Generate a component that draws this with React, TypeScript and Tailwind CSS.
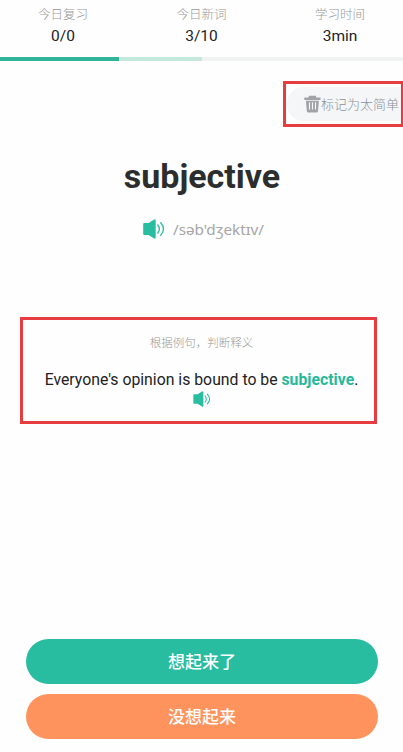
const stats = [
  { label: "今日复习", value: "0/0" },
  { label: "今日新词", value: "3/10" },
  { label: "学习时间", value: "3min" }
];

function SpeakerIcon({ className }: { className?: string }) {
  return (
    <svg viewBox="0 0 22 20" className={className} fill="none">
      <path
        d="M1.2 4H5.6L10.8.7Q12.7-.3 12.7 1.6V18.4Q12.7 20.3 10.8 19.3L5.6 16H1.2Q.2 16 .2 15V5Q.2 4 1.2 4Z"
        fill="#28bda0"
      />
      <path
        d="M14.8 6Q18 10 14.8 14M17.7 3.8Q23.3 10 17.7 16.2"
        stroke="#28bda0"
        strokeWidth="1.3"
        strokeLinecap="round"
      />
    </svg>
  );
}

function TrashIcon() {
  return (
    <svg viewBox="0 0 17 18" className="h-[18px] w-[17px] shrink-0" fill="none">
      <path d="M4.7.7H12.1V2.5H16.5V5H.3V2.5H4.7Z" fill="#a1a3a7" />
      <path d="M1.9 5.8H14.9L14 16Q13.9 17.5 12.4 17.5H4.4Q2.9 17.5 2.8 16Z" fill="#a1a3a7" />
      <path d="M5.5 7.2V14.4M8.5 7.2V14.4M11.5 7.2V14.4" stroke="#f4f6f8" strokeWidth="1.1" />
    </svg>
  );
}

function Header() {
  return (
    <header>
      <div className="flex h-[57px] justify-between px-[38px] pt-[5px]">
        {stats.map((item) => (
          <div key={item.label} className="flex w-[50px] flex-col items-center whitespace-nowrap">
            <span className="text-[12.5px] leading-5 font-light text-[#999]">{item.label}</span>
            <span className="text-[15.5px] leading-[23px] text-[#222]">{item.value}</span>
          </div>
        ))}
      </div>
      <div className="flex h-1 bg-[#f0f3f2]">
        <div className="w-[119px] bg-[#2fb499]" />
        <div className="w-[83px] bg-[#c5e8dd]" />
      </div>
    </header>
  );
}

export default function App() {
  return (
    <div className="flex h-[752px] w-[403px] flex-col overflow-hidden bg-[#fefefe] font-['Roboto','Noto_Sans_CJK_SC',sans-serif]">
      <Header />

      <div className="mt-5 ml-[283px] h-[46px] w-[121px] border-[3px] border-[#e83d40] py-[3px] pl-px">
        <button className="flex h-[34px] w-full items-center rounded-l-full bg-[#f4f6f8] pl-[17px] whitespace-nowrap">
          <TrashIcon />
          <span className="pt-px text-[13px] font-light text-[#8c9198]">标记为太简单</span>
        </button>
      </div>

      <main className="flex flex-col items-center">
        <h1 className="mt-7 pl-px text-[34px] leading-[42px] font-bold text-[#2c2e2e]">subjective</h1>
        <div className="mt-5 flex h-6 items-center gap-2 pl-1">
          <SpeakerIcon className="h-5 w-[22px]" />
          <span className="font-['Noto_Sans',sans-serif] text-[15.3px] text-[#a6a6a6]">/səb'dʒektɪv/</span>
        </div>

        <section className="mt-[76px] mr-[6px] flex h-[107px] w-[357px] flex-col items-center border-[3px] border-[#e83d40] pl-[6px]">
          <p className="mt-[13px] text-[11.5px] leading-5 font-light text-[#999]">根据例句，判断释义</p>
          <p className="mt-[15px] text-[15.8px] leading-6 whitespace-nowrap text-[#222]">
            Everyone's opinion is bound to be <b className="font-bold text-[#28b99c]">subjective</b>.
          </p>
          <SpeakerIcon className="-mt-px h-4 w-[18px]" />
        </section>
      </main>

      <footer className="mt-auto flex flex-col gap-[10px] pr-[25px] pb-[13px] pl-[26px] text-[17px] font-medium text-white">
        <button className="h-[45px] rounded-full bg-[#28bda0] pt-[2px]">想起来了</button>
        <button className="h-[45px] rounded-full bg-[#ff935d] pt-[2px]">没想起来</button>
      </footer>
    </div>
  );
}
